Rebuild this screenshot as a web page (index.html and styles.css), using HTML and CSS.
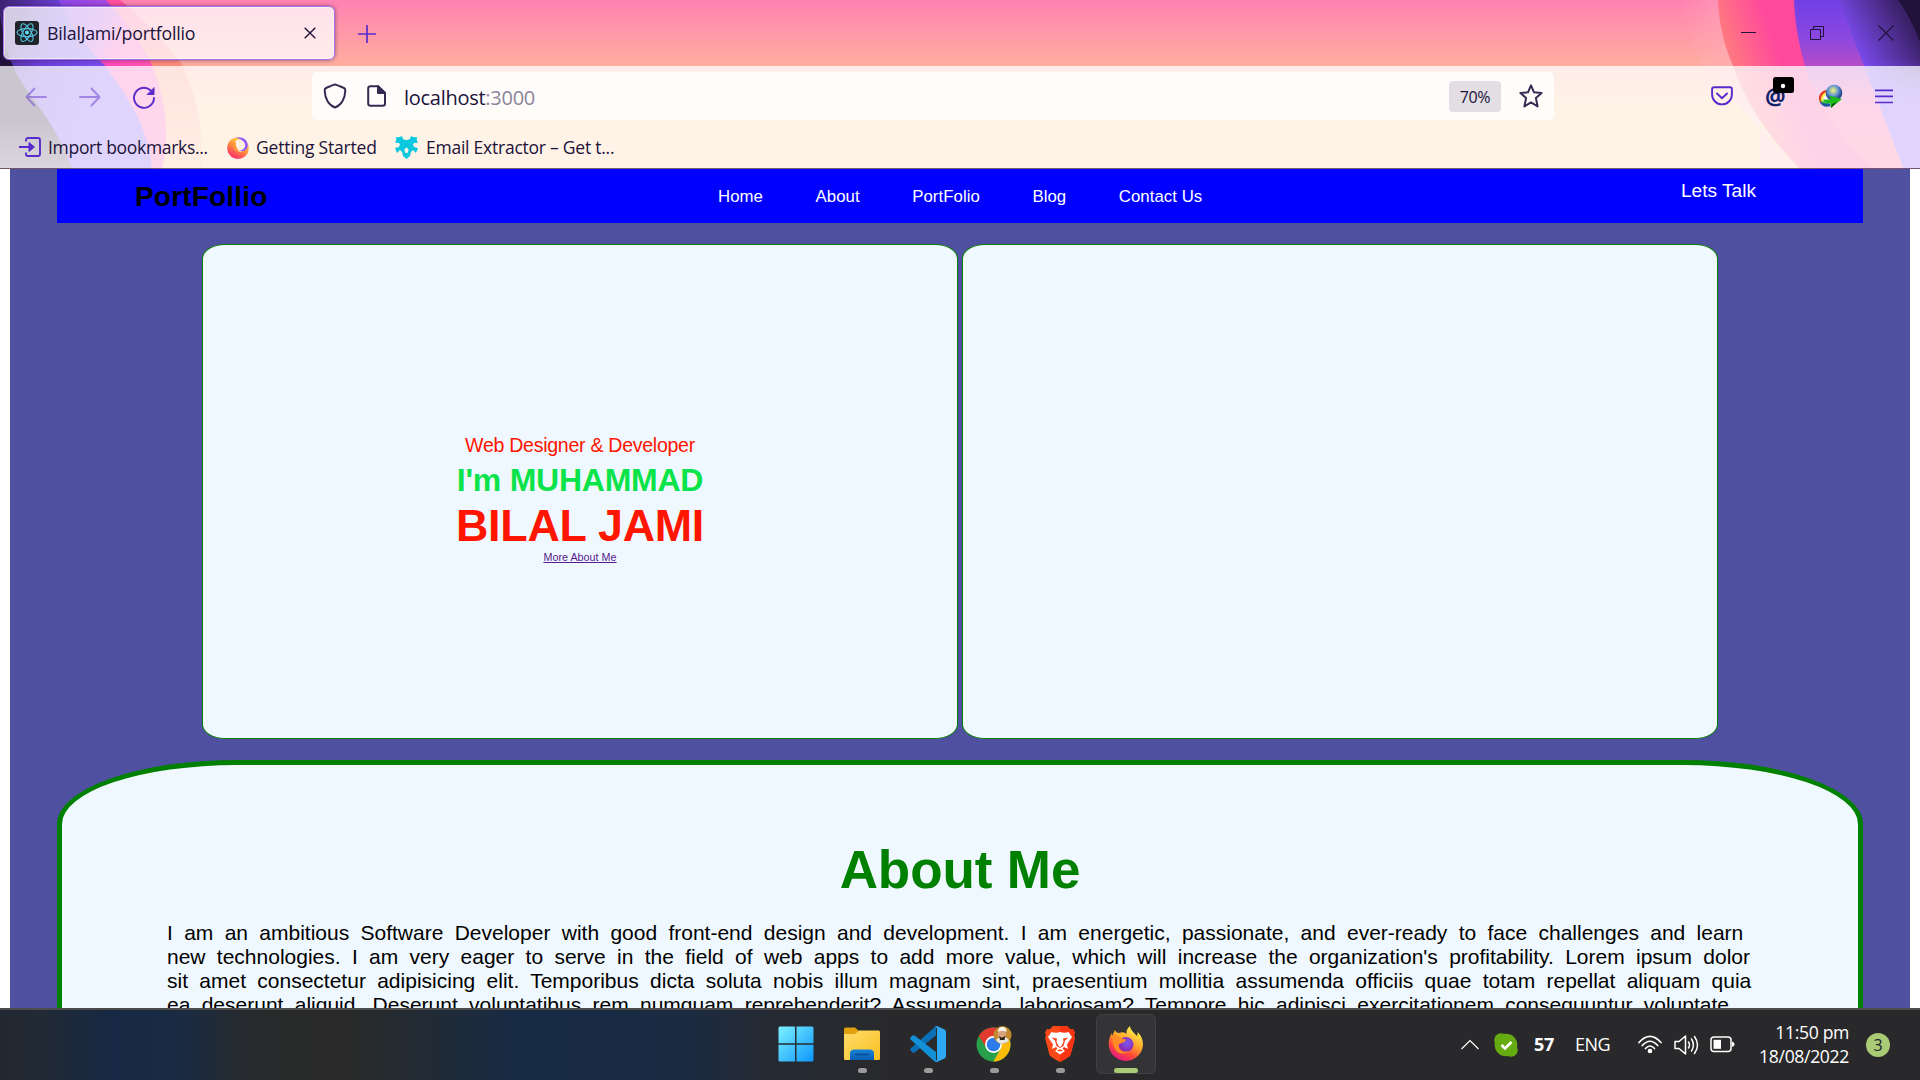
FILE: index.html
```html
<!DOCTYPE html>
<html lang="en">
<head>
<meta charset="utf-8">
<title>BilalJami/portfollio</title>
<link rel="stylesheet" href="styles.css">
</head>
<body>
<div class="screen">
  <header class="chrome">
    <svg class="theme" width="1920" height="169" viewBox="0 0 1920 169" aria-hidden="true">
      <defs>
        <linearGradient id="base" x1="0" y1="0" x2="0" y2="1"><stop offset="0" stop-color="#ff82b2"/><stop offset=".39" stop-color="#ffae9f"/><stop offset=".6" stop-color="#ffcb9c"/><stop offset="1" stop-color="#ffcc9c"/></linearGradient>
        <linearGradient id="lv" x1="0" y1="0" x2="110" y2="40" gradientUnits="userSpaceOnUse"><stop offset="0" stop-color="#3b2470"/><stop offset=".5" stop-color="#6b3fd6"/><stop offset="1" stop-color="#7a4cf0"/></linearGradient>
        <linearGradient id="lp" x1="60" y1="0" x2="170" y2="60" gradientUnits="userSpaceOnUse"><stop offset="0" stop-color="#8a48e8"/><stop offset=".35" stop-color="#a94be0"/><stop offset=".6" stop-color="#ff4bb8"/><stop offset="1" stop-color="#ff58b0"/></linearGradient>
        <linearGradient id="lo" x1="0" y1="0" x2="0" y2="1"><stop offset="0" stop-color="#ff4f9f"/><stop offset=".4" stop-color="#ff8f78"/><stop offset="1" stop-color="#ffb890"/></linearGradient>
        <linearGradient id="ld" x1="0" y1="0" x2="0" y2="169" gradientUnits="userSpaceOnUse"><stop offset=".7" stop-color="#20123a"/><stop offset="1" stop-color="#6a5570"/></linearGradient>
        <linearGradient id="ro" x1="1715" y1="66" x2="1775" y2="46" gradientUnits="userSpaceOnUse"><stop offset="0" stop-color="#ff8a76"/><stop offset="1" stop-color="#ff4a9c"/></linearGradient>
        <linearGradient id="rp" x1="0" y1="0" x2="0" y2="1"><stop offset="0" stop-color="#713fe6"/><stop offset=".22" stop-color="#8a48e0"/><stop offset=".39" stop-color="#b44cc8"/><stop offset=".65" stop-color="#ff58a0"/><stop offset="1" stop-color="#ff6090"/></linearGradient>
        <linearGradient id="rv" x1="1858" y1="60" x2="1912" y2="30" gradientUnits="userSpaceOnUse"><stop offset="0" stop-color="#7c4cf2"/><stop offset="1" stop-color="#3b2168"/></linearGradient>
        <linearGradient id="rt" x1="0" y1="0" x2="0" y2="1"><stop offset=".35" stop-color="#7c4cf2" stop-opacity="0"/><stop offset=".6" stop-color="#7c4cf2"/></linearGradient>
        <linearGradient id="glow" x1="1680" y1="0" x2="1750" y2="0" gradientUnits="userSpaceOnUse"><stop offset="0" stop-color="#ffb0c0" stop-opacity="0"/><stop offset="1" stop-color="#ffb0c0" stop-opacity=".6"/></linearGradient>
      </defs>
      <rect width="1920" height="169" fill="url(#base)"/>
      <path d="M0 0H120C140 15 168 45 183 66C198 100 203 130 202 169H0Z" fill="url(#lo)"/>
      <path d="M0 0H106C130 25 145 48 155 72C166 105 170 138 162 169H0Z" fill="url(#lp)"/>
      <path d="M0 0H59C72 30 82 42 105 66C128 97 148 125 152 169H0Z" fill="url(#lv)"/>
      <path d="M0 15C4 40 6 50 13 66C25 95 55 118 72 169H0Z" fill="url(#ld)"/>
      <path d="M1680 0H1760V169H1800L1700 66Z" fill="url(#glow)"/>
      <path d="M1718 0C1719 25 1724 45 1733 66C1748 108 1770 138 1800 169H1920V0Z" fill="url(#ro)"/>
      <path d="M1794 0C1795 25 1799 45 1805 66C1818 108 1842 138 1875 169H1920V0Z" fill="url(#rp)"/>
      <path d="M1839 0L1864 66L1904 169H1920V0Z" fill="url(#rv)"/>
      <path d="M1839 0L1864 66L1904 169H1920V0Z" fill="url(#rt)"/>
      <path d="M1898 0Q1911 18 1920 42V0Z" fill="#20123a"/>
    </svg>

    <div class="tabstrip">
      <div class="tab">
        <svg class="favicon" width="24" height="24" viewBox="0 0 24 24"><rect width="24" height="24" rx="3" fill="#20232a"/><g fill="none" stroke="#55c5e0" stroke-width="1.1"><ellipse cx="12" cy="11.6" rx="10" ry="4"/><ellipse cx="12" cy="11.6" rx="10" ry="4" transform="rotate(60 12 11.6)"/><ellipse cx="12" cy="11.6" rx="10" ry="4" transform="rotate(120 12 11.6)"/></g><circle cx="12" cy="11.6" r="2" fill="#61dafb"/></svg>
        <span class="tab-title">BilalJami/portfollio</span>
        <svg class="tab-close" width="12" height="12" viewBox="0 0 12 12"><path d="M.7.7 11.3 11.3M11.3.7.7 11.3" stroke="#20123a" stroke-width="1.4"/></svg>
      </div>
      <svg class="new-tab" width="18" height="18" viewBox="0 0 18 18"><path d="M9 .5V17.500M.5 9H17.500" stroke="#592acb" stroke-width="1.7" stroke-linecap="round"/></svg>
      <div class="window-buttons">
        <svg width="15" height="15" viewBox="0 0 15 15"><path d="M0 6.500H15" stroke="#20123a" stroke-width="1"/></svg>
        <svg width="14" height="14" viewBox="0 0 14 14"><path d="M.5 3.500H10.500V13.500H.5ZM3.500 3.500V.5H13.500V10.500H10.500" fill="none" stroke="#20123a"/></svg>
        <svg width="16" height="16" viewBox="0 0 16 16"><path d="M.5.5 15.500 15.500M15.500.5.5 15.500" stroke="#20123a" stroke-width="1.1"/></svg>
      </div>
    </div>

    <div class="toolbars">
      <div class="nav-toolbar">
        <div class="nav-buttons">
          <svg class="dim" width="22" height="20" viewBox="0 0 22 20"><path d="M21 10H2M9.500 1.500 1.500 10 9.500 18.500" /></svg>
          <svg class="dim" width="22" height="20" viewBox="0 0 22 20"><path d="M1 10H20M12.500 1.500 20.500 10 12.500 18.500"/></svg>
          <svg class="reload" width="24" height="24" viewBox="0 0 24 24"><path d="M22 13A10 10 0 1 1 18.500 5.200"/><path d="M22 3V9.500H15.500Z" fill="#592acb" stroke-width="1"/></svg>
        </div>
        <div class="urlbar">
          <svg class="shield" width="24" height="26" viewBox="0 0 24 26"><path d="M12 1.500Q13 1.500 21 5Q22.500 5.700 22.300 8C22 16 18 22.500 12 24.500C6 22.500 2 16 1.700 8Q1.500 5.700 3 5Q11 1.500 12 1.500Z"/></svg>
          <svg class="doc" width="20" height="22" viewBox="0 0 20 22"><path d="M3.500 1.200H11L18 8V18.500A2.300 2.300 0 0 1 15.700 20.800H3.500A2.300 2.300 0 0 1 1.200 18.500V3.500A2.300 2.300 0 0 1 3.500 1.200Z"/><path d="M11 1.200V8H18Z" fill="#352b52"/></svg>
          <span class="url">localhost<span class="port">:3000</span></span>
          <span class="zoom-level">70%</span>
          <svg class="star" width="24" height="24" viewBox="0 0 24 24"><path d="M12 1.400 15 8.300 22.600 9 16.900 14 18.600 22.400 12 18.400 5.400 22.400 7.100 14 1.400 9 9 8.300Z"/></svg>
        </div>
        <div class="extensions">
          <svg width="22" height="20" viewBox="0 0 22 20"><path d="M3 1.200H19A1.900 1.900 0 0 1 20.900 3V8.500A9.900 9.900 0 0 1 1.100 8.500V3A1.900 1.900 0 0 1 3 1.200ZM6 7.500 11 12.200 16 7.500" fill="none" stroke="#592acb" stroke-width="1.900" stroke-linecap="round" stroke-linejoin="round"/></svg>
          <span class="at">@<svg class="at-badge" width="21" height="17" viewBox="0 0 21 17"><rect width="21" height="16" rx="2.500" fill="#000"/><circle cx="10" cy="9" r="2.200" fill="#fff"/></svg></span>
          <svg width="25" height="25" viewBox="0 0 25 25"><defs><radialGradient id="globe" cx=".45" cy=".35"><stop offset="0" stop-color="#f0f2a8"/><stop offset=".35" stop-color="#a9c590"/><stop offset=".6" stop-color="#6b9be0"/><stop offset="1" stop-color="#2a4f90"/></radialGradient></defs><path d="M1 16A8.500 8.500 0 0 1 10 6L10 20Q3 22 1 16Z" fill="#e83a22"/><path d="M3 16A7 7 0 0 1 10 8L10 20Q4 21 3 16Z" fill="#fff04a"/><path d="M5 16A6 6 0 0 1 10 10L12 20Q6 21 5 16Z" fill="#f4f4ff"/><path d="M1.500 18Q6 20 10 17L13 22Q5 24.500 1.500 18Z" fill="#1b55a8"/><path d="M1 15Q4 19 10 15L12 19Q4 21 1 15Z" fill="#3cc43c"/><circle cx="16" cy="9" r="8.300" fill="url(#globe)"/><path d="M11 11.500 24 15 13 24 12 19Q7 19 5 15Q10 17 13 15Z" fill="#1bbd1b"/><path d="M14 20 19 18 13 24Z" fill="#075208"/></svg>
          <svg width="18" height="15" viewBox="0 0 18 15"><path d="M0 1.300H18M0 7.400H18M0 13.500H18" stroke="#592acb" stroke-width="1.700"/></svg>
        </div>
      </div>
      <div class="bookmarks">
        <svg class="bm-icon" width="22" height="20" viewBox="0 0 22 20"><path d="M7 4.500V3A2 2 0 0 1 9 1H19A2 2 0 0 1 21 3V17A2 2 0 0 1 19 19H9A2 2 0 0 1 7 17V15.500M0 10H12" fill="none" stroke="#592acb" stroke-width="1.900"/><path d="M10 5.500 15.500 10 10 14.500Z" fill="#592acb" stroke="#592acb"/></svg>
        <span class="bm bm-import">Import bookmarks...</span>
        <svg class="bm-icon" width="22" height="23" viewBox="0 0 22 23"><defs><linearGradient id="ffx" x1=".8" y1=".1" x2=".3" y2="1"><stop offset="0" stop-color="#ffe14d"/><stop offset=".5" stop-color="#ff8a3c"/><stop offset="1" stop-color="#f82a72"/></linearGradient></defs><circle cx="11" cy="12" r="10.800" fill="url(#ffx)"/><circle cx="13" cy="9.500" r="6.200" fill="#fdeee2"/><path d="M8 1.800C17-1 22 6 20.500 11C19.500 15 15 16 12.500 14C18 15 20 8 16 5C13 2.500 11 2 8 1.800Z" fill="#9059ff"/><path d="M7 5Q4 15 13 16Q8 11 9 7Z" fill="#ff9a3a"/></svg>
        <span class="bm bm-start">Getting Started</span>
        <svg class="bm-icon" width="23" height="23" viewBox="0 0 23 23"><path d="M8 3Q11.500 5 15 3L16 0Q19 2 22 1Q21 4 23 7Q20 6 18 8L19 11L23 12L21 17L18 14L16 16L15 20L11.500 23L8 20L7 16L5 14L2 17L0 12L4 11L5 8Q3 6 0 7Q2 4 1 1Q4 2 7 0Z" fill="#0cc8de"/><path d="M9.300 13.500 11.500 11.500 13.700 13.500 12.600 17H10.400Z" fill="#fff2e6"/></svg>
        <span class="bm bm-email">Email Extractor – Get t...</span>
      </div>
    </div>
  </header>

  <main class="viewport">
    <div class="page">
      <nav class="site-nav">
        <div class="brand">PortFollio</div>
        <div class="links"><a>Home</a><a>About</a><a>PortFolio</a><a>Blog</a><a>Contact Us</a></div>
        <div class="talk">Lets Talk</div>
      </nav>
      <section class="hero">
        <div class="card">
          <p class="role">Web Designer &amp; Developer</p>
          <h2 class="first">I'm MUHAMMAD</h2>
          <h1 class="last">BILAL JAMI</h1>
          <a class="more">More About Me</a>
        </div>
        <div class="card"></div>
      </section>
      <section class="about">
        <h1 class="about-title">About Me</h1>
        <p class="about-text">I am an ambitious Software Developer with good front-end design and development. I am energetic, passionate, and ever-ready to face challenges and learn<br>new technologies. I am very eager to serve in the field of web apps to add more value, which will increase the organization's profitability. Lorem ipsum dolor<br>sit amet consectetur adipisicing elit. Temporibus dicta soluta nobis illum magnam sint, praesentium mollitia assumenda officiis quae totam repellat aliquam quia<br>ea deserunt aliquid. Deserunt voluptatibus rem numquam reprehenderit? Assumenda, laboriosam? Tempore hic adipisci exercitationem consequuntur voluptate</p>
      </section>
    </div>
  </main>

  <footer class="taskbar">
    <div class="apps">
      <div class="app"><svg width="36" height="36" viewBox="0 0 36 36"><defs><linearGradient id="win" x1="0" y1="0" x2="1" y2="1"><stop offset="0" stop-color="#7df1ff"/><stop offset="1" stop-color="#0a97fb"/></linearGradient></defs><path d="M2 .5H17V17.300H.5V2A1.500 1.500 0 0 1 2 .5ZM18.500.5H34A1.500 1.500 0 0 1 35.500 2V17.300H18.500ZM.5 18.700H17V35.500H2A1.500 1.500 0 0 1 .5 34ZM18.500 18.700H35.500V34A1.500 1.500 0 0 1 34 35.500H18.500Z" fill="url(#win)"/></svg></div>
      <div class="app"><svg width="36" height="36" viewBox="0 0 36 36"><defs><linearGradient id="fold" x1="0" y1="0" x2="1" y2="1"><stop offset="0" stop-color="#ffdc6c"/><stop offset="1" stop-color="#fbbf20"/></linearGradient><linearGradient id="fb" x1="0" y1="0" x2="0" y2="1"><stop offset="0" stop-color="#1583d8"/><stop offset="1" stop-color="#0a5fb4"/></linearGradient></defs><path d="M0 3A1.500 1.500 0 0 1 1.500 1.500H11L15 5H20V12H0Z" fill="#e0a010"/><path d="M0 8H11L15 4.500H34.500A1.500 1.500 0 0 1 36 6V32.500A1.500 1.500 0 0 1 34.500 34H1.500A1.500 1.500 0 0 1 0 32.500Z" fill="url(#fold)"/><path d="M6 34V27A4 4 0 0 1 10 23.500H26A4 4 0 0 1 30 27V34Z" fill="url(#fb)"/><path d="M11 28.500H25" stroke="#084a8c" stroke-width="1.500"/></svg><i class="dot"></i></div>
      <div class="app"><svg width="36" height="36" viewBox="0 0 36 36"><path d="M26 0V9.500L4.500 26.500Q3.500 27.200 2.600 26.500L.6 24.600Q-.4 23.500.6 22.500Z" fill="#0a6fb5"/><path d="M26 36V26L4.500 9.500Q3.500 8.800 2.600 9.500L.6 11.300Q-.4 12.400.6 13.500L24 35Q25 36 27 36Z" fill="#1290d8"/><path d="M25 .5Q26-.2 27.500.3L34.500 3.500Q36 4.200 36 6V30Q36 31.800 34.500 32.500L27.500 35.700Q26 36.200 25 35.500Q27 35 27 33V3Q27 1 25 .5Z" fill="#2fa8f2"/></svg><i class="dot"></i></div>
      <div class="app"><svg width="36" height="36" viewBox="0 0 36 36"><circle cx="17.500" cy="18.500" r="17" fill="#28a04b"/><path d="M17.500 18.500 2.800 10A17 17 0 0 1 32.200 10Z" fill="#e23b2e"/><path d="M17.500 18.500 32.200 10A17 17 0 0 1 17.500 35.500L25 22Z" fill="#fbbc09"/><path d="M2.800 10 10.500 22 17.500 14V10Z" fill="#e23b2e"/><path d="M17.500 10.500H33V16L25 22Z" fill="#fbbc09"/><circle cx="17.500" cy="18.500" r="8.400" fill="#fff"/><circle cx="17.500" cy="18.500" r="6.800" fill="#2d7bea"/><circle cx="26.500" cy="9" r="9" fill="#c28a2c"/><path d="M20 14Q23 10 27 11Q32 11 33 15Q28 19 23 17Z" fill="#e8e5df"/><circle cx="26" cy="8" r="4.300" fill="#d9a27e"/><path d="M22 6Q22 1 26 1Q31 1 30.500 6Q26 3.500 22 6Z" fill="#f7f5ef"/><path d="M23 10Q26 13 29.500 9.500L28.500 14H24Z" fill="#35221a"/></svg><i class="dot"></i></div>
      <div class="app"><svg width="36" height="36" viewBox="0 0 36 36"><path d="M11 0H25L28.500 3.500L31 3L33 6.500L32 9.500L33 12L28.500 29Q27.500 31 18 36Q8.500 31 7.500 29L3 12L4 9.500L3 6.500L5 3L7.500 3.500Z" fill="#fb4a18"/><path d="M18 0H25L28.500 3.500L31 3L33 6.500L32 9.500L33 12L28.500 29Q27.500 31 18 36Z" fill="#f93412"/><path d="M9.500 6Q14 7.500 18 6Q22 7.500 26.500 6L30 11L25 18.500L26 23L22 21L20.500 22.500L23 25L18 28.500L13 25L15.500 22.500L14 21L10 23L11 18.500L6 11Z" fill="#fff"/><path d="M9.500 11.500 15 12.500 14.500 16 16.500 20 18 21 19.500 20 21.500 16 21 12.500 26.500 11.500 23 14.500 21.500 20 18 22 14.500 20 13 14.500ZM15 24.500Q18 22.500 21 24.500L18 25.500Z" fill="#f93e15"/></svg><i class="dot"></i></div>
      <div class="app active"><svg width="36" height="36" viewBox="0 0 36 36"><defs><linearGradient id="fox" x1=".8" y1=".1" x2=".3" y2="1"><stop offset="0" stop-color="#fff04a"/><stop offset=".4" stop-color="#ffa52c"/><stop offset=".7" stop-color="#ff4838"/><stop offset="1" stop-color="#e31587"/></linearGradient><radialGradient id="foxc" cx=".6" cy=".4"><stop offset="0" stop-color="#7a59f8"/><stop offset="1" stop-color="#8b2fb4"/></radialGradient></defs><path d="M22 0Q22 3 26 7Q28 9 29 10Q30 8 29.500 6Q35 11 35 19A17.200 17.200 0 0 1 .7 19Q.5 12 4 7V10L7 4Q8 7 11 7Q16 5 18.500 8Q18 3 22 0Z" fill="url(#fox)"/><circle cx="18" cy="18.500" r="7.500" fill="url(#foxc)"/><path d="M4 11Q5 8 8 8.500Q11 12 18 13.500Q17 16.500 13.500 17Q10.500 17.500 10.500 20Q12 28 22 25Q12 31 7 23Q4 18 4 11Z" fill="#ff8b25"/></svg><i class="dot wide"></i></div>
    </div>
    <div class="tray">
      <svg class="chevron" width="18" height="11" viewBox="0 0 18 11"><path d="M.5 10 9 1.500 17.500 10" fill="none" stroke="#fff" stroke-width="1.200"/></svg>
      <svg class="skype" width="24" height="24" viewBox="0 0 24 24"><circle cx="12" cy="12" r="11.300" fill="#67ab12"/><circle cx="7" cy="7" r="6.800" fill="#67ab12"/><circle cx="17" cy="17" r="6.800" fill="#67ab12"/><path d="M7.500 12 11 15.500 17.500 9" fill="none" stroke="#fff" stroke-width="2.600"/></svg>
      <span class="temp">57</span>
      <span class="lang">ENG</span>
      <svg class="wifi" width="24" height="19" viewBox="0 0 24 19"><g fill="none" stroke="#fff" stroke-width="1.700" stroke-linecap="round"><path d="M1 7.500Q12-4.800 23 7.500M4.300 10.500Q12 2 19.700 10.500M7.500 13.500Q12 8.500 16.500 13.500"/></g><circle cx="12" cy="16" r="2.300" fill="#fff"/></svg>
      <svg class="volume" width="25" height="20" viewBox="0 0 25 20"><g fill="none" stroke="#fff" stroke-width="1.500" stroke-linejoin="round" stroke-linecap="round"><path d="M1 6.500H5L11.500 1V19L5 13.500H1ZM14.500 7Q16.500 10 14.500 13M17.500 4Q21.300 10 17.500 16M20.500 1.500Q26.500 10 20.500 18.500"/></g></svg>
      <svg class="battery" width="25" height="17" viewBox="0 0 25 17"><rect x="1" y="1" width="20" height="14.500" rx="3" fill="none" stroke="#fff" stroke-width="1.500"/><rect x="3.500" y="3.800" width="7.500" height="9" fill="#fff"/><path d="M22 5.500Q24.500 6 24.500 8.300T22 11Z" fill="#fff"/></svg>
      <div class="clock"><span>11:50 pm</span><span>18/08/2022</span></div>
      <span class="notif">3</span>
    </div>
  </footer>
</div>
</body>
</html>
```
FILE: styles.css
```css
* { box-sizing: border-box; }
body { margin: 0; background: #fff; }
h1, h2, p { margin: 0; }
svg { display: block; flex: none; }
.screen { width: 1920px; height: 1080px; overflow: hidden; display: flex; flex-direction: column; font-family: "Open Sans", "Noto Sans", sans-serif; }

/* browser chrome */
.chrome { height: 169px; flex: none; position: relative; color: #20123a; }
.theme { position: absolute; inset: 0; z-index: -1; }
.tabstrip { height: 66px; display: flex; align-items: flex-start; padding: 6px 26px 0 3px; }
.tab { width: 332px; height: 54px; display: flex; align-items: center; padding: 0 18px 0 11px; border: 1.5px solid #a373ea; border-radius: 6px; background: rgba(255,255,255,.76); box-shadow: inset 0 0 0 1px rgba(255,255,255,.5), 0 0 4px rgba(60,20,80,.6); }
.tab-title { margin-left: 8px; font-size: 17.8px; letter-spacing: -.24px; white-space: nowrap; }
.tab-close { margin-left: auto; }
.new-tab { margin: 19px 0 0 23px; }
.window-buttons { margin: 19px 0 0 auto; width: 153px; display: flex; align-items: center; justify-content: space-between; height: 16px; }
.window-buttons svg { overflow: visible; }
.toolbars { height: 103px; background: rgba(255,255,255,.76); border-bottom: 1px solid rgba(70,30,50,.7); }
.nav-toolbar { height: 60px; display: flex; align-items: center; }
.nav-buttons { width: 312px; padding: 2px 0 0 25px; display: flex; align-items: center; gap: 32px; }
.nav-buttons svg { fill: none; stroke: #592acb; stroke-width: 1.9; stroke-linecap: round; stroke-linejoin: round; }
.nav-buttons .dim { opacity: .45; }
.nav-buttons .reload { margin-left: -1px; }
.urlbar { width: 1242px; height: 48px; border-radius: 5px; background: rgba(255,255,255,.8); display: flex; align-items: center; padding: 0 11px; }
.urlbar svg { fill: none; stroke: #352b52; stroke-width: 2; stroke-linejoin: round; }
.doc { margin-left: 20px; }
.url { margin-left: 17px; padding-top: 2px; font-size: 20px; letter-spacing: -.27px; white-space: nowrap; }
.port { color: #8b8499; }
.zoom-level { margin-left: auto; width: 52px; height: 31px; border-radius: 4px; background: #e3dee3; font-size: 16px; letter-spacing: -.4px; line-height: 32px; text-align: center; }
.star { margin-left: 18px; }
.extensions { margin-left: 157px; display: flex; align-items: center; gap: 32px; }
.at { position: relative; width: 21px; font: bold 23px/24px "Open Sans", sans-serif; color: #12246b; }
.at-badge { position: absolute; left: 8px; top: -7px; }
.bookmarks { height: 42px; display: flex; align-items: center; padding-left: 19px; white-space: nowrap; font-size: 17.5px; }
.bm { margin-left: 7px; }
.bm-import { width: 179px; letter-spacing: -.3px; }
.bm-start { width: 139px; letter-spacing: -.2px; }
.bm-email { margin-left: 8px; letter-spacing: -.24px; }

/* web page */
.viewport { height: 839px; flex: none; overflow: hidden; padding: 0 10px; background: #fff; font-family: "Liberation Sans", Arial, sans-serif; }
.page { height: 100%; padding: 0 47px; background: #5050a0; display: flex; flex-direction: column; }
.site-nav { height: 54px; flex: none; background: #00f; display: flex; }
.brand { width: 661px; padding-left: 78px; font-size: 28px; letter-spacing: .18px; font-weight: bold; line-height: 55px; color: #000; }
.links { display: flex; gap: 52.5px; font-size: 16.8px; letter-spacing: .06px; line-height: 56px; color: #fff; white-space: nowrap; }
.talk { margin: 0 107px 0 auto; font-size: 19.1px; line-height: 43px; color: #fff; }
.hero { margin: 21px 0 0; flex: none; display: flex; justify-content: center; gap: 4px; }
.card { width: 756px; height: 495px; border: 1px solid green; border-radius: 3%; background: #f0f8ff; display: flex; flex-direction: column; align-items: center; padding-top: 189px; }
.role { color: #ff1500; font-size: 19.6px; letter-spacing: -.3px; line-height: 23px; white-space: nowrap; }
.first { color: #0be34a; font-size: 32px; letter-spacing: -.25px; line-height: 38px; margin-top: 4px; white-space: nowrap; }
.last { color: #ff1500; font-size: 44.8px; letter-spacing: -.25px; line-height: 52px; white-space: nowrap; }
.more { color: #551a8b; font-size: 10.8px; line-height: 13px; text-decoration: underline; }
.about { margin-top: 21px; height: 650px; flex: none; border: 5px solid green; border-radius: 180px 180px 0 0 / 64px 64px 0 0; background: #f0f8ff; padding: 75px 0 0 105px; }
.about-title { margin-left: -105px; text-align: center; color: green; font-size: 53px; letter-spacing: -.1px; line-height: 60px; }
.about-text { margin-top: 21px; font-size: 21px; line-height: 24px; word-spacing: 5.48px; white-space: nowrap; color: #000; }

/* taskbar */
.taskbar { height: 72px; flex: none; border-top: 2px solid #4b4b4c; color: #fff; display: flex; justify-content: flex-end; background: linear-gradient(90deg, #222831 0, #222a35 40px, #162843 110px, #1a2b43 180px, #272a2c 250px, #292a28 340px, #222b34 420px, #182b45 520px, #1a2b42 680px, #242a34 760px, #29292b 900px, #29292b 100%); }
.apps { width: 396px; margin-right: 299px; display: flex; padding-top: 4px; }
.app { width: 60px; height: 60px; margin-right: 6px; flex: none; display: flex; flex-direction: column; align-items: center; padding-top: 12px; }
.app svg { flex: none; }
.active { border: 1px solid #414143; border-radius: 6px; background: #343436; padding-top: 11px; }
.dot { width: 9px; height: 5px; margin-top: 6px; border-radius: 3px; background: #9b9b9c; }
.wide { width: 24px; background: #a9cb76; }
.tray { width: 459px; height: 69px; display: flex; align-items: center; flex: none; }
.skype { margin-left: 15px; }
.temp { margin: -2px 0 0 16px; width: 41px; font-size: 18px; font-weight: 700; letter-spacing: -.3px; }
.lang { margin-top: -2px; width: 63px; font-size: 18px; letter-spacing: -.5px; }
.volume { margin-left: 12px; }
.battery { margin-left: 11px; }
.clock { margin: -2px 0 0 auto; display: flex; flex-direction: column; align-items: flex-end; font-size: 17.6px; line-height: 24px; letter-spacing: -.35px; }
.notif { margin: 0 30px 0 17px; width: 24px; height: 24px; border-radius: 50%; background: #a9cb76; color: #20242a; font-size: 16px; line-height: 24px; text-align: center; }
```
